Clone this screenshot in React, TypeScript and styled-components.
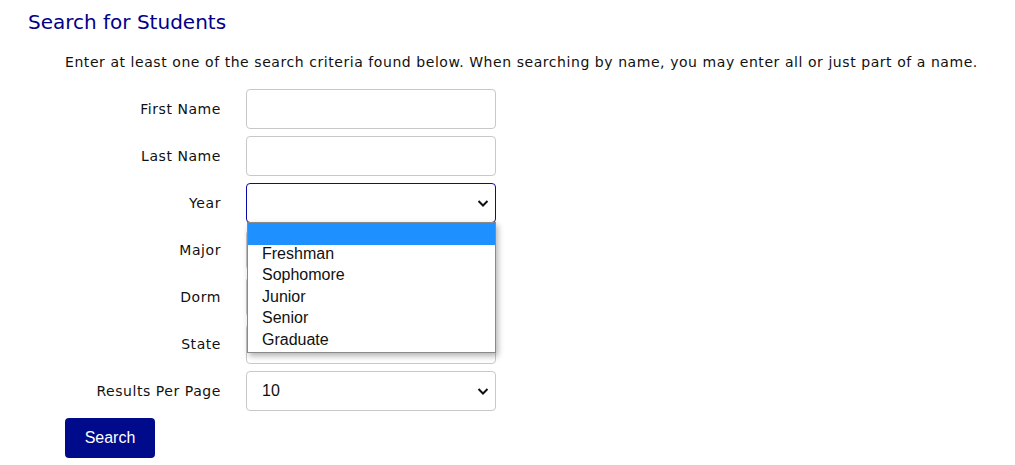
import React from "react";
import styled, { createGlobalStyle } from "styled-components";

const Global = createGlobalStyle`
  html, body { margin: 0; padding: 0; background: #fff; }
  body { font-family: "DejaVu Sans", Verdana, sans-serif; color: #111; }
  * { box-sizing: border-box; }
`;

const Page = styled.div`
  padding: 10px 28px 0 28px;
`;

const Heading = styled.h1`
  margin: 0;
  font-size: 20px;
  font-weight: normal;
  line-height: 24px;
  color: #00008b;
`;

const Intro = styled.p`
  margin: 18px 0 0 37px;
  font-size: 14px;
  letter-spacing: 0.56px;
  line-height: 20px;
  color: #111;
  white-space: nowrap;
`;

const FormGrid = styled.div`
  display: grid;
  grid-template-columns: 156px 250px;
  column-gap: 25px;
  row-gap: 7px;
  margin: 17px 0 0 37px;
  align-items: center;
`;

const Label = styled.label`
  text-align: right;
  font-size: 14px;
  letter-spacing: 0.56px;
  color: #111;
`;

const TextInput = styled.input`
  display: block;
  width: 250px;
  height: 40px;
  border: 1px solid #c8c8c8;
  border-radius: 4px;
  padding: 0 15px;
  font-family: "Liberation Sans", Arial, sans-serif;
  font-size: 16px;
  outline: none;
  background: #fff;
`;

const SelectWrap = styled.div`
  position: relative;
  width: 250px;
  height: 40px;
`;

const SelectBox = styled.div<{ $focused?: boolean }>`
  display: flex;
  align-items: center;
  justify-content: space-between;
  width: 250px;
  height: 40px;
  border: 1px solid ${(p) => (p.$focused ? "#0a0aa8" : "#c8c8c8")};
  border-radius: 4px;
  padding: 0 5px 0 15px;
  font-family: "Liberation Sans", Arial, sans-serif;
  font-size: 16px;
  color: #111;
  background: #fff;
`;

const Chevron = () => (
  <svg width="14" height="14" viewBox="0 0 14 14" aria-hidden="true">
    <path d="M2.5 5 L7 9.5 L11.5 5" fill="none" stroke="#111" strokeWidth="2" />
  </svg>
);

const Popup = styled.ul`
  position: absolute;
  top: 39px;
  left: 1px;
  width: 249px;
  margin: 0;
  padding: 0;
  list-style: none;
  background: #fff;
  border: 1px solid #8a8a8a;
  box-shadow: 2px 3px 6px rgba(0, 0, 0, 0.3);
  z-index: 10;
  font-family: "Liberation Sans", Arial, sans-serif;
  font-size: 16px;
`;

const Option = styled.li<{ $active?: boolean }>`
  height: 21.5px;
  line-height: 18px;
  padding-left: 14px;
  color: ${(p) => (p.$active ? "#fff" : "#111")};
  background: ${(p) => (p.$active ? "#1e90ff" : "#fff")};
`;

const Button = styled.button`
  margin: 7px 0 0 37px;
  width: 90px;
  height: 40px;
  border: none;
  border-radius: 4px;
  background: #000b8c;
  color: #fff;
  font-family: "Liberation Sans", Arial, sans-serif;
  font-size: 16px;
`;

const Select: React.FC<{ value?: string; focused?: boolean; options?: string[] }> = ({
  value = "",
  focused,
  options,
}) => (
  <SelectWrap>
    <SelectBox $focused={focused}>
      <span>{value}</span>
      <Chevron />
    </SelectBox>
    {options && (
      <Popup>
        {options.map((o, i) => (
          <Option key={i} $active={i === 0}>
            {o}
          </Option>
        ))}
      </Popup>
    )}
  </SelectWrap>
);

export default function App() {
  return (
    <Page>
      <Global />
      <Heading>Search for Students</Heading>
      <Intro>
        Enter at least one of the search criteria found below. When searching by name, you may
        enter all or just part of a name.
      </Intro>
      <FormGrid>
        <Label>First Name</Label>
        <TextInput />
        <Label>Last Name</Label>
        <TextInput />
        <Label>Year</Label>
        <Select
          focused
          options={["\u00a0", "Freshman", "Sophomore", "Junior", "Senior", "Graduate"]}
        />
        <Label>Major</Label>
        <Select />
        <Label>Dorm</Label>
        <Select />
        <Label>State</Label>
        <Select />
        <Label>Results Per Page</Label>
        <Select value="10" />
      </FormGrid>
      <Button>Search</Button>
    </Page>
  );
}
